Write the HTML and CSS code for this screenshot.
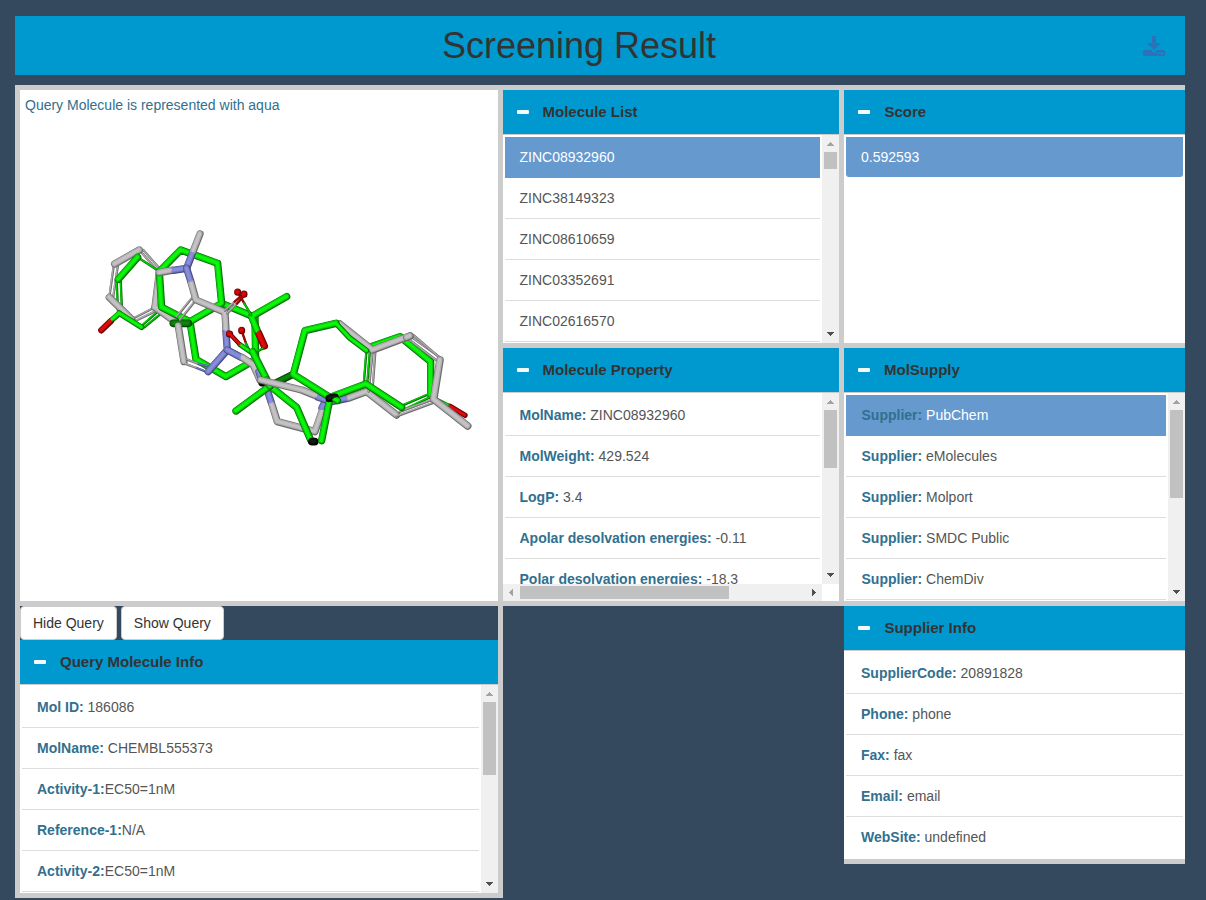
FILE: index.html
```
<!DOCTYPE html>
<html lang="en">
<head>
<meta charset="utf-8">
<title>Screening Result</title>
<link rel="stylesheet" href="styles.css">
</head>
<body>
<header class="banner">
  <h1>Screening Result</h1>
  <svg class="download" width="22" height="20" viewBox="0 0 22 20"><path fill-rule="evenodd" d="M9 0h4v7h5l-7 7-7-7h5zM1 14h7l3 3 3-3h7l1 1v4l-1 1H1l-1-1v-4zM15 16v1.500h1.500V16zM18.500 16v1h-1v1h1v1h1v-1h1v-1h-1v-1z"/></svg>
</header>
<main class="board">
  <section class="cell viewer">
    <p>Query Molecule is represented with aqua</p>
    <svg id="molecule" width="478" height="511" viewBox="0 0 478 511"></svg>
  </section>

  <section class="cell mid">
    <h2><i class="minus"></i>Molecule List</h2>
    <div class="body">
      <ul class="list">
        <li class="active">ZINC08932960</li><li>ZINC38149323</li><li>ZINC08610659</li><li>ZINC03352691</li><li>ZINC02616570</li>
      </ul>
      <div class="vbar"><svg class="arrow off" viewBox="0 0 7 4"><path d="M3 0h1v1h1v1h1v1h1v1H0V3h1V2h1V1h1z"/></svg><b class="thumb t-list"></b><svg class="arrow end" viewBox="0 0 7 4"><path d="M0 0h7v1H6v1H5v1H4v1H3V3H2V2H1V1H0z"/></svg></div>
    </div>
  </section>

  <section class="cell right">
    <h2><i class="minus"></i>Score</h2>
    <div class="body">
      <ul class="list"><li class="active only">0.592593</li></ul>
    </div>
  </section>

  <section class="cell mid">
    <h2><i class="minus"></i>Molecule Property</h2>
    <div class="body with-hbar">
      <ul class="list">
        <li><b>MolName:</b> ZINC08932960</li><li><b>MolWeight:</b> 429.524</li><li><b>LogP:</b> 3.4</li><li><b>Apolar desolvation energies:</b> -0.11</li><li><b>Polar desolvation energies:</b> -18.3</li>
      </ul>
      <div class="vbar"><svg class="arrow off" viewBox="0 0 7 4"><path d="M3 0h1v1h1v1h1v1h1v1H0V3h1V2h1V1h1z"/></svg><b class="thumb t-prop"></b><svg class="arrow end" viewBox="0 0 7 4"><path d="M0 0h7v1H6v1H5v1H4v1H3V3H2V2H1V1H0z"/></svg></div>
      <div class="hbar"><svg class="harrow off" viewBox="0 0 4 7"><path d="M4 0v7H3V6H2V5H1V4H0V3h1V2h1V1h1V0z"/></svg><b class="hthumb"></b><svg class="harrow end" viewBox="0 0 4 7"><path d="M0 0v7h1V6h1V5h1V4h1V3H3V2H2V1H1V0z"/></svg></div>
    </div>
  </section>

  <section class="cell right supply">
    <h2><i class="minus"></i>MolSupply</h2>
    <div class="body">
      <ul class="list">
        <li class="active"><b>Supplier:</b> PubChem</li><li><b>Supplier:</b> eMolecules</li><li><b>Supplier:</b> Molport</li><li><b>Supplier:</b> SMDC Public</li><li><b>Supplier:</b> ChemDiv</li>
      </ul>
      <div class="vbar"><svg class="arrow off" viewBox="0 0 7 4"><path d="M3 0h1v1h1v1h1v1h1v1H0V3h1V2h1V1h1z"/></svg><b class="thumb t-supply"></b><svg class="arrow end" viewBox="0 0 7 4"><path d="M0 0h7v1H6v1H5v1H4v1H3V3H2V2H1V1H0z"/></svg></div>
    </div>
  </section>

  <section class="cell query">
    <div class="buttons"><button>Hide Query</button><button>Show Query</button></div>
    <h2><i class="minus"></i>Query Molecule Info</h2>
    <div class="body">
      <ul class="list">
        <li><b>Mol ID:</b> 186086</li><li><b>MolName:</b> CHEMBL555373</li><li><b>Activity-1:</b>EC50=1nM</li><li><b>Reference-1:</b>N/A</li><li><b>Activity-2:</b>EC50=1nM</li>
      </ul>
      <div class="vbar"><svg class="arrow off" viewBox="0 0 7 4"><path d="M3 0h1v1h1v1h1v1h1v1H0V3h1V2h1V1h1z"/></svg><b class="thumb t-query"></b><svg class="arrow end" viewBox="0 0 7 4"><path d="M0 0h7v1H6v1H5v1H4v1H3V3H2V2H1V1H0z"/></svg></div>
    </div>
  </section>

  <section class="cell empty"></section>

  <section class="cell right info">
    <h2><i class="minus"></i>Supplier Info</h2>
    <div class="body">
      <ul class="list">
        <li><b>SupplierCode:</b> 20891828</li><li><b>Phone:</b> phone</li><li><b>Fax:</b> fax</li><li><b>Email:</b> email</li><li class="last"><b>WebSite:</b> undefined</li>
      </ul>
    </div>
  </section>
</main>
<script src="molecule.js"></script>
</body>
</html>
```
FILE: styles.css
```
* { box-sizing: border-box; }
html { height: 100%; overflow: hidden; }
body {
  margin: 0;
  padding: 16px 21px 0 15px;
  height: 900px;
  overflow: hidden;
  background: #34495e;
  color: #555;
  font: 14px/20px "Liberation Sans", Arial, sans-serif;
}
.banner {
  display: flex;
  align-items: center;
  height: 59px;
  padding: 0 20px 0 0;
  background: #0099cf;
}
.banner h1 {
  flex: 1;
  margin: 0;
  text-align: center;
  color: #333;
  font-size: 36px;
  font-weight: 400;
  line-height: 40px;
}
.download { fill: #2d72b8; }
.board {
  display: grid;
  grid-template-columns: 483px 341px 346px;
  grid-template-rows: 258px 258px 297px;
  margin-top: 10px;
}
.cell {
  border: solid #ccc;
  border-width: 5px 0 0 5px;
  min-width: 0;
  display: flex;
  flex-direction: column;
}
.viewer { grid-row: span 2; display: grid; background: #fff; }
.viewer p, .viewer svg { grid-area: 1 / 1; }
.viewer p { margin: 5px; color: #31708f; }
.cell h2 {
  display: flex;
  align-items: center;
  gap: 14px;
  flex: none;
  height: 45px;
  margin: 0;
  padding: 0 14px;
  border-bottom: 1px solid #ccc;
  background: #0099cf;
  color: #333;
  font-size: 15px;
  line-height: 20px;
}
.mid h2 { gap: 13.5px; }
.right h2 { gap: 14.4px; }
.supply h2 { gap: 14px; }
.minus {
  width: 12px;
  height: 4px;
  border-radius: 1px;
  background: #f5fafc;
}
.body {
  flex: none;
  display: grid;
  grid-template-columns: minmax(0, 1fr) auto;
  grid-template-rows: minmax(0, 1fr);
  height: 208px;
  background: #fff;
}
.with-hbar { grid-template-rows: minmax(0, 1fr) 17px; }
.list {
  margin: 0;
  padding: 2px 2px 0;
  list-style: none;
  overflow: hidden;
}
.list li {
  height: 41px;
  padding: 10px 15px;
  border-bottom: 1px solid #ddd;
  white-space: nowrap;
}
.mid li { padding-left: 14.5px; }
.supply li { padding-left: 15.5px; }
.list b { color: #31708f; }
.list .active { background: #6699ce; border-color: #6699ce; color: #fff; }
.list .only { height: 40px; border: 0; border-radius: 0 0 3px 3px; }
.list .last { border: 0; }
.vbar, .hbar { display: flex; background: #f0f0f0; }
.vbar { flex-direction: column; align-items: center; width: 17px; padding: 7px 0; }
.hbar { align-items: center; padding: 0 6px; }
.arrow { width: 7px; height: 4px; fill: #505050; }
.harrow { width: 4px; height: 7px; fill: #505050; }
.arrow.off, .harrow.off { fill: #a3a3a3; }
.arrow.end { margin-top: auto; }
.harrow.end { margin-left: auto; }
.thumb { width: 13px; margin-top: 6px; background: #c1c1c1; }
.t-list { height: 17px; }
.t-prop { height: 58px; }
.t-supply { height: 88px; }
.t-query { height: 73px; }
.hthumb { width: 209px; height: 13px; margin-left: 7px; background: #c1c1c1; }
.query { border-bottom-width: 5px; }
.buttons { display: flex; gap: 4px; }
.buttons button {
  height: 34px;
  padding: 6px 12px;
  border: 1px solid #ccc;
  border-radius: 4px;
  background: #fff;
  color: #333;
  font: inherit;
}
.empty { margin-right: -5px; }
.info { align-self: start; margin-left: 5px; border-width: 5px 0; }
.outline, .fill, .shine { fill: none; stroke-linecap: round; stroke-linejoin: round; }
```
FILE: molecule.js
```
// Stick model: [element colour, stroke width, x1, y1, x2, y2, ...]
const shades = {
  g: ['#067006', '#04cf04', '#0cf60c'],
  d: ['#033c03', '#076c07', '#0b850b'],
  w: ['#6c6c6c', '#aeacae', '#c4c2c4'],
  n: ['#474b85', '#7379bf', '#888edb'],
  r: ['#650000', '#bd0404', '#de0c0c'],
  k: ['#000', '#090c09', '#141a14']
};
const T = 21, S = 6;
const left = [
  ['w',S,72,132,58,232],['w',S,84,134,70,230],
  ['w',S,125,298,195,262],['w',S,130,306,200,272],
  ['w',S,148,90,208,158],['w',S,160,90,216,154],
  ['g',S,80,178,84,275],['g',S,92,178,96,270],
  ['g',S,150,322,218,262],['g',S,163,322,226,270],
  ['g',S,143,112,205,152],
  ['w',T,148,90,74,132],['w',T,58,232,125,298],
  ['g',T,143,112,85,178],
  ['g',16,155,322,88,280],['g',16,88,280,60,305],['r',18,62,304,34,331],
  ['w',T,208,158,195,262],['w',T,195,262,265,312],
  ['g',T,395,250,495,292,497,418,408,470,318,418,300,305],
  ['g',T,383,130,395,250,300,305,215,262,208,155,272,90,383,130],
  ['d',22,250,310,295,310],
  ['w',S,318,240,270,300],['w',S,304,236,260,290],
  ['w',T,265,318,282,425],
  ['w',S,282,430,320,444],['n',S,320,444,355,458],['w',S,290,418,325,432],['n',S,325,432,360,440],
  ['w',T,208,158,245,151],['n',T,250,151,290,145],['n',T,290,145,308,98],['w',T,310,93,330,42],
  ['n',T,290,145,303,186],['w',T,304,190,318,240,405,277,408,330],
  ['n',T,408,337,412,390,355,455],['n',T,412,390,453,412],['w',T,458,413,490,435,510,480],
  ['w',S,405,272,433,246],['r',S,433,246,460,222],
  ['w',S,412,280,440,252],['r',S,440,252,465,225],
  ['r',20,462,222,462,223],
  ['g',T,590,230,485,290],['g',T,485,290,503,335],['r',T,506,340,523,378],
  ['g',S,520,385,490,400],
  ['r',S,443,216,463,250],['g',S,463,250,484,286],['r',20,443,216,443,217],
  ['r',S,455,332,468,370],['g',S,468,370,480,395],['r',20,455,331,455,332],
  ['g',14,488,400,450,374],['r',12,450,374,420,342],['r',20,419,342,418,342]
];
const right = [
  ['n',T,117,275,125,300],
  ['d',T,155,315,215,285],
  ['n',T,140,325,154,368],['w',T,156,374,172,425,285,455,306,394],['n',T,306,384,318,360],
  ['g',T,98,215,150,318,230,382,272,480],
  ['k',18,125,310,145,310],
  ['g',T,48,393,150,318],['g',T,140,300,150,318],
  ['w',T,122,300,245,330,290,348],['n',T,295,352,335,365,382,355],['w',T,387,354,440,335,530,405],
  ['g',S,440,205,432,305],['g',S,450,210,442,310],
  ['w',S,458,215,446,335],['w',S,466,216,458,325],
  ['g',T,440,205,540,170,632,245,632,345],
  ['g',S,632,340,548,376],['g',S,636,349,550,390],
  ['w',S,640,358,535,397],['w',S,644,367,530,409],
  ['w',S,570,168,660,232],['w',S,565,177,652,243],['w',S,580,165,665,238],
  ['g',T,545,382,438,312,330,352],
  ['w',T,360,132,458,210,570,168],
  ['g',T,330,352,220,283,255,152,348,130],
  ['g',16,348,130,390,175,440,212],
  ['k',22,276,485,284,485],['g',T,330,355,305,482],
  ['k',22,328,355,345,352],['g',20,346,358,353,362],
  ['g',9,650,358,686,376],['r',15,690,379,735,406],
  ['w',T,570,168,560,172],['w',22,660,240,641,358,743,438]
];
const svg = document.getElementById('molecule');
function add(parent, name, attrs) {
  const el = document.createElementNS('http://www.w3.org/2000/svg', name);
  for (const key in attrs) el.setAttribute(key, attrs[key]);
  parent.appendChild(el);
}
// Sticks that start where the previous one stopped are shaded as one chain.
function chains(sticks) {
  const result = [];
  let previous = null;
  for (const stick of sticks) {
    const joined = previous && Math.hypot(stick[2] - previous[previous.length - 2], stick[3] - previous[previous.length - 1]) < 11;
    if (joined) result[result.length - 1].push(stick);
    else result.push([stick]);
    previous = stick;
  }
  return result;
}
function draw(sticks, transform) {
  const name = 'http://www.w3.org/2000/svg';
  const group = document.createElementNS(name, 'g');
  group.setAttribute('transform', transform);
  svg.appendChild(group);
  for (const chain of chains(sticks)) {
    ['outline', 'fill', 'shine'].forEach((layer, i) => {
      for (const [kind, width, ...points] of chain) {
        const thick = width > 8;
        if (!thick && i === 2) continue;
        add(group, 'polyline', {
          class: layer,
          points: points.join(' '),
          stroke: shades[kind][i],
          'stroke-width': [width + 1, thick ? width - 4 : width - 2, width * 0.45][i],
          transform: i ? 'translate(-1 -1)' : 'translate(0 0)'
        });
      }
    });
  }
}
draw(left, 'translate(70 130) scale(.33333)');
draw(right, 'translate(200 190) scale(.33333)');
```
